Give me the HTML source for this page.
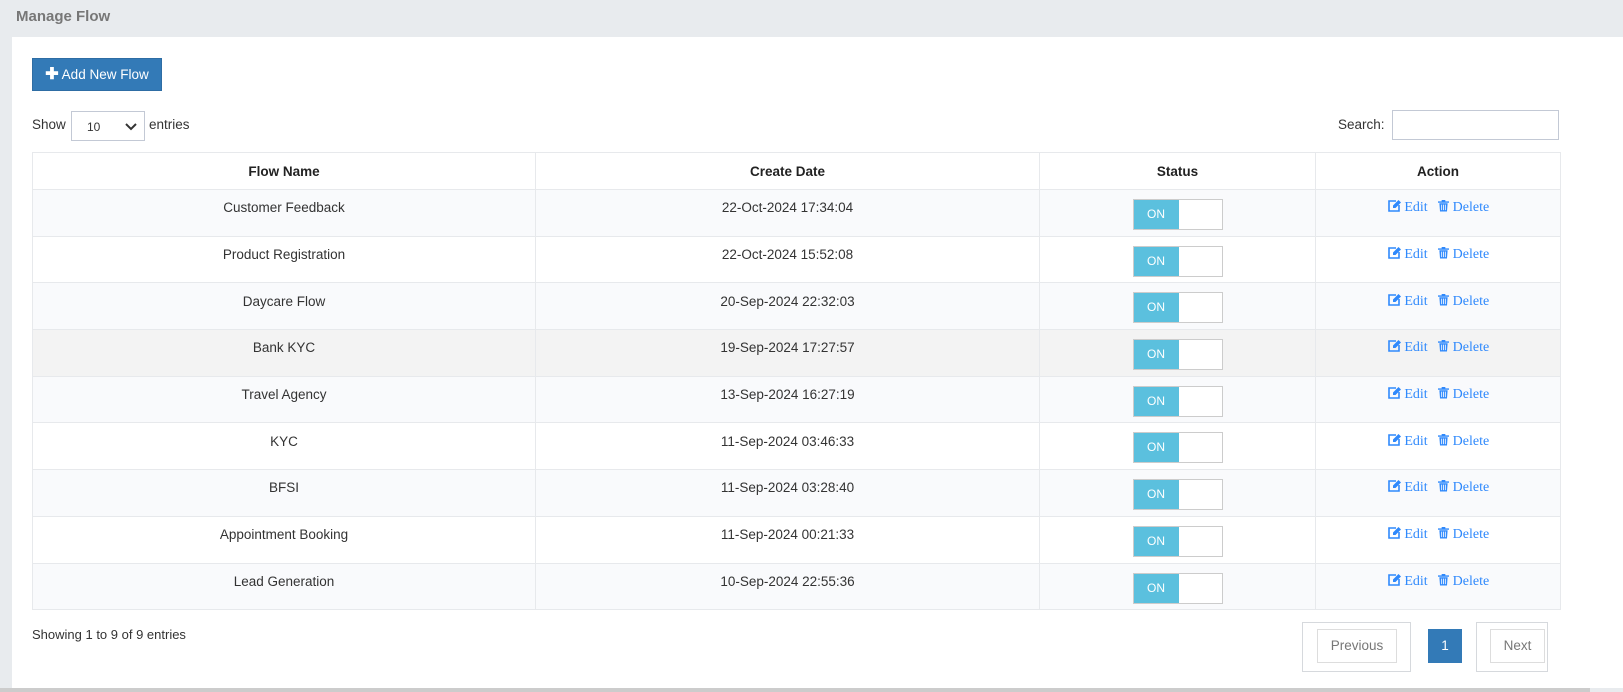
<!DOCTYPE html>
<html><head><style>
*{box-sizing:border-box;margin:0;padding:0}
body{width:1623px;height:692px;background:#e8ebee;font-family:"Liberation Sans",sans-serif;font-size:13px;color:#333;position:relative;overflow:hidden}
.title{position:absolute;left:16px;top:8px;font-size:15px;font-weight:bold;color:#777}
.panel{position:absolute;left:12px;top:37px;right:0;height:651px;background:#fff}
.btn{position:absolute;left:32px;top:58px;width:130px;height:33px;background:#337ab7;border:1px solid #2e6da4;color:#fff;font-size:13.5px;line-height:31px;text-align:center}
.abs{position:absolute}
table{position:absolute;left:32px;top:152px;width:1529px;border-collapse:collapse}
td,th{border:1px solid #e7e9ec;text-align:center;height:46.7px;font-size:13.5px;color:#333;font-weight:normal;vertical-align:middle;padding-bottom:10px}
th{font-weight:bold;height:37px;padding-bottom:0;font-size:13.5px;color:#222}
tr.o td{background:#f9fafc}
tr.h td{background:#f3f3f3}
.tg{display:inline-block;width:90px;height:31px;border:1px solid #ccc;background:#fff;margin-top:9px;text-align:left;vertical-align:top}
.tg span{display:inline-block;width:45px;height:29px;background:#5bc0de;color:#fff;font-size:12px;line-height:29px;text-align:center}
td.st{padding-bottom:0;vertical-align:top}
.act{font-family:"Liberation Serif",serif;color:#2f89fc;font-size:14px}
.act svg{vertical-align:-1px}
.pbox{position:absolute;border:1px solid #d6d9dd;top:622px;height:50px}
.pb{position:absolute;border:1px solid #ddd;top:629px;height:34px;line-height:32px;text-align:center;color:#777;font-size:13.5px;background:#fff}
</style></head><body>
<svg width="0" height="0" style="position:absolute"><defs>
<symbol id="ed" viewBox="0 0 14 13"><path d="M9 2H2v10h10V6" stroke="#2f89fc" stroke-width="1.6" fill="none"/><path d="M6 9l0-2.5 5.5-5.5 2.5 2.5L8.5 9z" fill="#2f89fc"/></symbol>
<symbol id="tr" viewBox="0 0 12 13"><path d="M0 2h12v1.5H0zM4 0.5h4v1.5H4z" fill="#2f89fc"/><path d="M1.5 4h9l-0.7 9H2.2z" fill="#2f89fc"/><path d="M4 5.5v6M6 5.5v6M8 5.5v6" stroke="#fff" stroke-width="0.9"/></symbol>
</defs></svg>
<div class="title">Manage Flow</div>
<div class="panel"></div>
<div class="btn"><b style="font-size:16px">✚</b> Add New Flow</div>
<div class="abs" style="left:32px;top:117px;font-size:13.5px">Show</div>
<div class="abs" style="left:71px;top:111px;width:74px;height:30px;border:1px solid #c3c9d5;font-size:12px;padding:8px 0 0 15px">10<svg style="position:absolute;left:53px;top:10px" width="12" height="9" viewBox="0 0 12 9"><path d="M1 2l5 5 5-5" stroke="#333" stroke-width="2" fill="none"/></svg></div>
<div class="abs" style="left:149px;top:117px;font-size:13.5px">entries</div>
<div class="abs" style="left:1338px;top:117px;font-size:13.5px">Search:</div>
<div class="abs" style="left:1392px;top:110px;width:167px;height:30px;border:1px solid #c3c9d5"></div>
<table>
<tr><th style="width:503px">Flow Name</th><th style="width:504px">Create Date</th><th style="width:276px">Status</th><th>Action</th></tr>
<tr class="o"><td>Customer Feedback</td><td>22-Oct-2024 17:34:04</td><td class="st"><span class="tg"><span>ON</span></span></td><td class="act"><svg width="14" height="13"><use href="#ed"/></svg> Edit &nbsp; <svg width="11" height="13"><use href="#tr"/></svg> Delete</td></tr>
<tr><td>Product Registration</td><td>22-Oct-2024 15:52:08</td><td class="st"><span class="tg"><span>ON</span></span></td><td class="act"><svg width="14" height="13"><use href="#ed"/></svg> Edit &nbsp; <svg width="11" height="13"><use href="#tr"/></svg> Delete</td></tr>
<tr class="o"><td>Daycare Flow</td><td>20-Sep-2024 22:32:03</td><td class="st"><span class="tg"><span>ON</span></span></td><td class="act"><svg width="14" height="13"><use href="#ed"/></svg> Edit &nbsp; <svg width="11" height="13"><use href="#tr"/></svg> Delete</td></tr>
<tr class="h"><td>Bank KYC</td><td>19-Sep-2024 17:27:57</td><td class="st"><span class="tg"><span>ON</span></span></td><td class="act"><svg width="14" height="13"><use href="#ed"/></svg> Edit &nbsp; <svg width="11" height="13"><use href="#tr"/></svg> Delete</td></tr>
<tr class="o"><td>Travel Agency</td><td>13-Sep-2024 16:27:19</td><td class="st"><span class="tg"><span>ON</span></span></td><td class="act"><svg width="14" height="13"><use href="#ed"/></svg> Edit &nbsp; <svg width="11" height="13"><use href="#tr"/></svg> Delete</td></tr>
<tr><td>KYC</td><td>11-Sep-2024 03:46:33</td><td class="st"><span class="tg"><span>ON</span></span></td><td class="act"><svg width="14" height="13"><use href="#ed"/></svg> Edit &nbsp; <svg width="11" height="13"><use href="#tr"/></svg> Delete</td></tr>
<tr class="o"><td>BFSI</td><td>11-Sep-2024 03:28:40</td><td class="st"><span class="tg"><span>ON</span></span></td><td class="act"><svg width="14" height="13"><use href="#ed"/></svg> Edit &nbsp; <svg width="11" height="13"><use href="#tr"/></svg> Delete</td></tr>
<tr><td>Appointment Booking</td><td>11-Sep-2024 00:21:33</td><td class="st"><span class="tg"><span>ON</span></span></td><td class="act"><svg width="14" height="13"><use href="#ed"/></svg> Edit &nbsp; <svg width="11" height="13"><use href="#tr"/></svg> Delete</td></tr>
<tr class="o"><td>Lead Generation</td><td>10-Sep-2024 22:55:36</td><td class="st"><span class="tg"><span>ON</span></span></td><td class="act"><svg width="14" height="13"><use href="#ed"/></svg> Edit &nbsp; <svg width="11" height="13"><use href="#tr"/></svg> Delete</td></tr>
</table>
<div class="abs" style="left:32px;top:627px;font-size:13px">Showing 1 to 9 of 9 entries</div>
<div class="pbox" style="left:1302px;width:109px"></div>
<div class="pb" style="left:1317px;width:80px">Previous</div>
<div class="pb" style="left:1428px;width:34px;background:#337ab7;border-color:#337ab7;color:#fff">1</div>
<div class="pbox" style="left:1476px;width:72px"></div>
<div class="pb" style="left:1490px;width:55px">Next</div>
<div class="abs" style="left:0;top:688px;width:1590px;height:4px;background:#ccc"></div>
</body></html>
